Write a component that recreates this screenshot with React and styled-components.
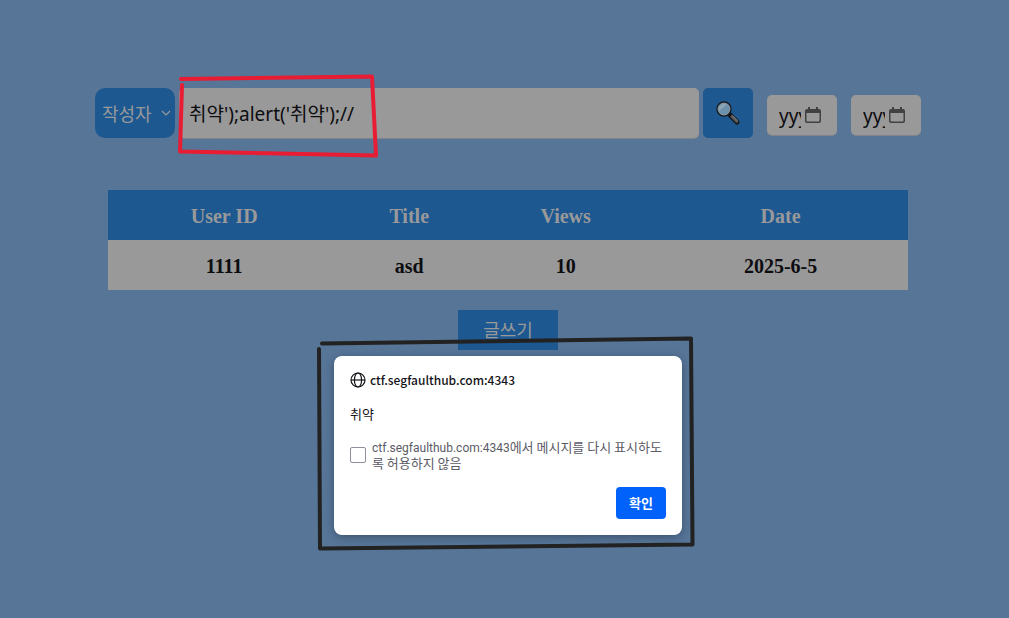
import React from "react";
import styled, { createGlobalStyle } from "styled-components";

const c = {
  page: "#577597",
  blue: "#1d5891",
  grey: "#99999a",
  ink: "#0d0d10",
  red: "#e81c33",
  black: "#222222",
};
const ui = `"Noto Sans", "Noto Sans CJK KR", sans-serif`;

const GlobalStyle = createGlobalStyle`
  *, *::before, *::after { box-sizing: border-box; }
  body { margin: 0; background: ${c.page}; }
  button, input, select { font: inherit; margin: 0; border: 0; }
`;

const Page = styled.main`
  min-height: 100vh;
  padding: 87px 0 32px 7px;
  display: flex;
  flex-direction: column;
  align-items: center;
  font-family: ${ui};
`;

const SearchBar = styled.form`
  position: relative;
  display: flex;
  align-items: center;
  gap: 4px;
  width: 100%;
  max-width: 826px;
  height: 52px;
`;

const SelectWrap = styled.div`
  position: relative;
  flex: none;
  width: 80px;
  height: 50px;
`;

const Select = styled.select`
  appearance: none;
  width: 100%;
  height: 100%;
  padding: 2px 7px 0;
  border-radius: 10px;
  background: ${c.blue};
  color: ${c.grey};
  font-size: 18px;
`;

const SelectArrow = styled.svg`
  position: absolute;
  right: 4px;
  top: 20px;
  pointer-events: none;
`;

const SearchInput = styled.input`
  flex: 1;
  min-width: 0;
  height: 50px;
  padding: 0 10px;
  border-radius: 5px;
  background: ${c.grey};
  box-shadow: 0 1px 0 #808389;
  color: ${c.ink};
  font-size: 19px;
`;

const SearchButton = styled.button`
  flex: none;
  display: grid;
  place-items: center;
  width: 50px;
  height: 50px;
  padding: 0;
  border-radius: 5px;
  background: ${c.blue};
`;

const Dates = styled.div`
  display: flex;
  align-self: flex-end;
  gap: 14px;
  padding: 0 0 4px 10px;
`;

const DateField = styled.label`
  display: flex;
  align-items: center;
  gap: 4px;
  width: 70px;
  height: 40px;
  padding: 0 12px;
  border-radius: 5px;
  background: ${c.grey};
  box-shadow: 0 1px 0 #808389;
`;

const DateInput = styled.input`
  flex: none;
  width: 22px;
  padding: 2px 0 0;
  background: transparent;
  font-size: 19px;
  color: ${c.ink};
  &::placeholder { color: ${c.ink}; opacity: 1; }
`;

const Board = styled.table`
  width: 100%;
  max-width: 800px;
  margin-top: 51px;
  border-collapse: collapse;
  font: bold 20px "Liberation Serif", serif;
  text-align: center;
`;

const Row = styled.tr`
  height: 50px;
  background: ${(p) => (p.$head ? c.blue : c.grey)};
  color: ${(p) => (p.$head ? c.grey : c.ink)};
`;

const Cell = styled.td`
  padding: 2px 0 0;
`;

const WriteButton = styled.button`
  width: 100px;
  height: 40px;
  margin-top: 20px;
  padding: 0 0 2px;
  background: ${c.blue};
  color: ${c.grey};
  font-size: 18px;
`;

const Overlay = styled.div`
  position: absolute;
  inset: 0;
  padding: 356px 0 0 7px;
  display: flex;
  justify-content: center;
  align-items: flex-start;
`;

const Dialog = styled.section`
  position: relative;
  display: flex;
  flex-direction: column;
  gap: 16px;
  width: 348px;
  padding: 16px;
  border-radius: 8px;
  background: #fff;
  box-shadow: 0 2px 8px rgba(20, 30, 50, 0.4);
  color: #15141a;
  font: 13px/16px "Noto Sans CJK KR", sans-serif;
`;

const Origin = styled.h1`
  display: flex;
  align-items: center;
  gap: 4px;
  margin: 0;
  font-size: 12px;
  font-weight: 500;
  line-height: 16px;
`;

const Message = styled.p`
  margin: 0;
  line-height: 19px;
`;

const Suppress = styled.label`
  display: flex;
  align-items: center;
  gap: 6px;
  color: #5b5b66;
`;

const Host = styled.span`
  font-family: Roboto, sans-serif;
  font-size: 12px;
  line-height: 12px;
`;

const Checkbox = styled.input`
  appearance: none;
  flex: none;
  width: 16px;
  height: 16px;
  border: 1px solid #8f8f9d;
  border-radius: 2px;
  background: #fff;
`;

const Confirm = styled.button`
  align-self: flex-end;
  width: 50px;
  height: 32px;
  padding: 0;
  border-radius: 4px;
  background: #0061fb;
  color: #fff;
  font-weight: 700;
`;

const Marker = styled.svg`
  position: absolute;
  left: ${(p) => p.$left}px;
  top: ${(p) => p.$top}px;
  fill: none;
  stroke-linecap: round;
  stroke-linejoin: round;
  pointer-events: none;
`;

const Magnifier = () => (
  <svg width="26" height="26" viewBox="0 0 26 26" aria-hidden="true">
    <path d="M15 15 L22 22" stroke="#17191c" strokeWidth="5.2" strokeLinecap="round" />
    <path d="M17 16.5 L21.7 21.3" stroke="#57585b" strokeWidth="3" strokeLinecap="round" />
    <path d="M17.5 16 L22.3 20.6" stroke="#858587" strokeWidth="1" strokeLinecap="round" />
    <circle cx="9" cy="9" r="7" fill="#6d91ad" stroke="#17191c" strokeWidth="1.4" />
    <path d="M4 11 A6 6 0 0 1 12 4 Z" fill="#8ea5b5" />
    <circle cx="9" cy="9" r="5.9" fill="none" stroke="#8b9299" strokeWidth="0.8" />
  </svg>
);

const Calendar = () => (
  <svg width="16" height="17" viewBox="0 0 16 17" aria-hidden="true">
    <path d="M3 0h2v2h6V0h2v2h1a2 2 0 0 1 2 2v10a2 2 0 0 1-2 2H2a2 2 0 0 1-2-2V4a2 2 0 0 1 2-2h1zM1.5 6v7.5q0 1 1 1h11q1 0 1-1V6z" fill="#414143" fillRule="evenodd" />
  </svg>
);

const Globe = () => (
  <svg width="16" height="16" viewBox="0 0 16 16" fill="none" stroke="#15141a" strokeWidth="1.2" aria-hidden="true">
    <circle cx="8" cy="8" r="7" />
    <ellipse cx="8" cy="8" rx="3.6" ry="7" />
    <path d="M1 8h14" />
  </svg>
);

export default function App() {
  return (
    <>
      <GlobalStyle />
      <Page>
        <SearchBar onSubmit={(e) => e.preventDefault()}>
          <SelectWrap>
            <Select aria-label="검색 기준" defaultValue="author">
              <option value="author">작성자</option>
            </Select>
            <SelectArrow width="10" height="10" viewBox="0 0 10 10" fill="none" stroke={c.grey} strokeWidth="1.2">
              <path d="M1 3l4 4 4-4" />
            </SelectArrow>
          </SelectWrap>
          <SearchInput aria-label="검색어" defaultValue="취약');alert('취약');//" />
          <SearchButton aria-label="검색">
            <Magnifier />
          </SearchButton>
          <Dates>
            {["시작일", "종료일"].map((name) => (
              <DateField key={name}>
                <DateInput aria-label={name} placeholder="yyyy-mm-dd" />
                <Calendar />
              </DateField>
            ))}
          </Dates>
          <Marker $left={80} $top={-16} width="206" height="90" stroke={c.red} strokeWidth="4">
            <path d="M6 8L197 5.500L201 84.500L5 80.500L7 14" />
          </Marker>
        </SearchBar>

        <Board>
          <thead>
            <Row $head>
              {["User ID", "Title", "Views", "Date"].map((t) => (
                <Cell as="th" key={t} scope="col">{t}</Cell>
              ))}
            </Row>
          </thead>
          <tbody>
            <Row>
              {["1111", "asd", "10", "2025-6-5"].map((t) => (
                <Cell key={t}>{t}</Cell>
              ))}
            </Row>
          </tbody>
        </Board>
        <WriteButton type="button">글쓰기</WriteButton>
      </Page>

      <Overlay>
        <Dialog role="dialog" aria-labelledby="origin">
          <Origin id="origin">
            <Globe />
            ctf.segfaulthub.com:4343
          </Origin>
          <Message>취약</Message>
          <Suppress>
            <Checkbox type="checkbox" />
            <span>
              <Host>ctf.segfaulthub.com:4343</Host>에서 메시지를 다시 표시하도록 허용하지 않음
            </span>
          </Suppress>
          <Confirm type="button">확인</Confirm>
          <Marker $left={-20} $top={-24} width="384" height="222" stroke={c.black} strokeWidth="4">
            <path d="M8 11.500L377 6.500L378.500 212.500L6 216.500L5 17" />
          </Marker>
        </Dialog>
      </Overlay>
    </>
  );
}
